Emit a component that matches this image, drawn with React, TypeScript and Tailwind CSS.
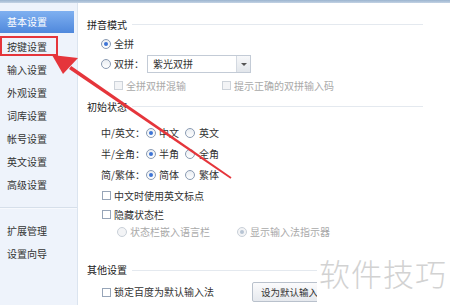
import React from 'react';

const font = { fontFamily: '"Noto Sans CJK SC", "Noto Sans", sans-serif' };

const Radio = ({ checked = false, disabled = false }: { checked?: boolean; disabled?: boolean }) => (
    <span
        className={
            'flex items-center justify-center w-[10px] h-[10px] rounded-full border shrink-0 ' +
            (disabled ? 'border-[#c9d0d8] bg-[#f3f4f6]' : 'border-[#8a9bb2] bg-gradient-to-b from-[#e9edf2] to-white')
        }
    >
        {checked && (
            <span className={'w-[4px] h-[4px] rounded-full ' + (disabled ? 'bg-[#b8c4d4]' : 'bg-[#3d74d6]')}></span>
        )}
    </span>
);

const Check = ({ disabled = false }: { disabled?: boolean }) => (
    <span
        className={
            'w-[9px] h-[9px] border shrink-0 ' +
            (disabled ? 'border-[#cdd3da] bg-[#f3f4f6]' : 'border-[#97a5b8] bg-white')
        }
    ></span>
);

// section title with a faint rule running to the right
const Header = ({ title, className }: { title: string; className: string }) => (
    <div className={'flex items-center pl-[9px] ' + className}>
        <span className="text-[#222]">{title}</span>
        <span className="flex-1 h-px bg-[#e4e9ef] ml-[5px] mr-[27px]"></span>
    </div>
);

const Choice = ({ label, a, b }: { label: string; a: string; b: string }) => (
    <div className="flex items-center pl-[23px]">
        <span className="w-[45px]">{label}</span>
        <div className="flex items-center gap-[3px] w-[39px]">
            <Radio checked />
            <span>{a}</span>
        </div>
        <div className="flex items-center gap-[4px]">
            <Radio />
            <span>{b}</span>
        </div>
    </div>
);

const items = ['按键设置', '输入设置', '外观设置', '词库设置', '帐号设置', '英文设置', '高级设置'];

export default function App() {
    return (
        <div className="relative w-[450px] h-[305px] overflow-hidden bg-white text-[10px] text-[#333] leading-none" style={font}>
            <div className="h-[3px] bg-gradient-to-b from-[#9bb4cf] to-[#c3d3e4]"></div>
            <div className="flex h-[302px]">
                {/* sidebar */}
                <div className="w-[78px] shrink-0 bg-[#eef3fb] border-r border-[#dbe4ef] pt-[8px]">
                    <div className="h-[22px] w-[74px] flex items-center pl-[7px] text-white bg-gradient-to-b from-[#7fb0f0] to-[#4f88dc]">
                        基本设置
                    </div>
                    <div className="mt-[2px]">
                        {items.map((t) => (
                            <div key={t} className="h-[23px] flex items-center pl-[7px]">
                                {t}
                            </div>
                        ))}
                    </div>
                    <div className="mt-[11px] h-[2px] border-t border-[#d6dfea] bg-[#f7f9fd]"></div>
                    <div className="mt-[10px]">
                        <div className="h-[23px] flex items-center pl-[7px]">扩展管理</div>
                        <div className="h-[23px] flex items-center pl-[7px]">设置向导</div>
                    </div>
                </div>

                {/* main */}
                <div className="flex-1 flex flex-col pt-[12px]">
                    <Header title="拼音模式" className="h-[20px]" />
                    <div className="h-[20px] flex items-center gap-[3px] pl-[23px]">
                        <Radio checked />
                        <span>全拼</span>
                    </div>
                    <div className="h-[22px] flex items-center pl-[23px]">
                        <Radio />
                        <span className="ml-[3px] w-[33px]">双拼：</span>
                        <div className="flex items-stretch h-[18px] w-[104px] border border-[#c3cbd6] bg-white">
                            <span className="flex-1 flex items-center pl-[5px]">紫光双拼</span>
                            <span className="w-[14px] flex items-center justify-center border-l border-[#d3d9e1] bg-gradient-to-b from-[#f7f8fa] to-[#e2e6eb]">
                                <span className="w-0 h-0 border-l-[3px] border-r-[3px] border-t-[3px] border-l-transparent border-r-transparent border-t-[#555]"></span>
                            </span>
                        </div>
                    </div>
                    <div className="h-[22px] flex items-center pl-[36px] text-[#a9a9a9]">
                        <div className="flex items-center gap-[3px] w-[108px]">
                            <Check disabled />
                            <span>全拼双拼混输</span>
                        </div>
                        <div className="flex items-center gap-[3px]">
                            <Check disabled />
                            <span>提示正确的双拼输入码</span>
                        </div>
                    </div>
                    <Header title="初始状态" className="h-[22px]" />
                    <div className="mt-[5px] h-[22px] flex items-center">
                        <Choice label="中/英文：" a="中文" b="英文" />
                    </div>
                    <div className="h-[21px] flex items-center">
                        <Choice label="半/全角：" a="半角" b="全角" />
                    </div>
                    <div className="h-[22px] flex items-center">
                        <Choice label="简/繁体：" a="简体" b="繁体" />
                    </div>
                    <div className="h-[21px] flex items-center gap-[3px] pl-[24px]">
                        <Check />
                        <span>中文时使用英文标点</span>
                    </div>
                    <div className="h-[19px] flex items-center gap-[3px] pl-[24px]">
                        <Check />
                        <span>隐藏状态栏</span>
                    </div>
                    <div className="h-[17px] flex items-center pl-[39px] text-[#a9a9a9]">
                        <div className="flex items-center gap-[3px] w-[120px]">
                            <Radio disabled />
                            <span>状态栏嵌入语言栏</span>
                        </div>
                        <div className="flex items-center gap-[3px]">
                            <Radio checked disabled />
                            <span>显示输入法指示器</span>
                        </div>
                    </div>
                    <Header title="其他设置" className="h-[20px] mt-[20px]" />
                    <div className="h-[26px] flex items-center pl-[24px]">
                        <div className="flex items-center gap-[3px] w-[150px]">
                            <Check />
                            <span>锁定百度为默认输入法</span>
                        </div>
                        <div className="h-[20px] w-[70px] flex items-center pl-[8px] border border-[#b9c1cc] rounded-[2px] bg-gradient-to-b from-[#fbfbfc] to-[#e6e9ee] text-[9.5px]">
                            设为默认输入
                        </div>
                    </div>
                </div>
            </div>

            {/* watermark */}
            <div className="absolute left-[317px] top-[249px] right-0 bottom-0 bg-white flex pl-[2px] pt-[8px]">
                <span className="text-[31px] font-light text-[#d2d2d2] tracking-[1px]">软件技巧</span>
            </div>

            {/* annotation */}
            <svg className="absolute inset-0 pointer-events-none" width="450" height="305" viewBox="0 0 450 305">
                <rect x="1" y="37" width="56" height="18" fill="none" stroke="#e5353b" strokeWidth="2" />
                <polygon points="231.5,177.3 230.5,178.7 69,69 71.2,66" fill="#e5353b" />
                <polygon points="52,55 78,58 63,74" fill="#e5353b" />
            </svg>
        </div>
    );
}
